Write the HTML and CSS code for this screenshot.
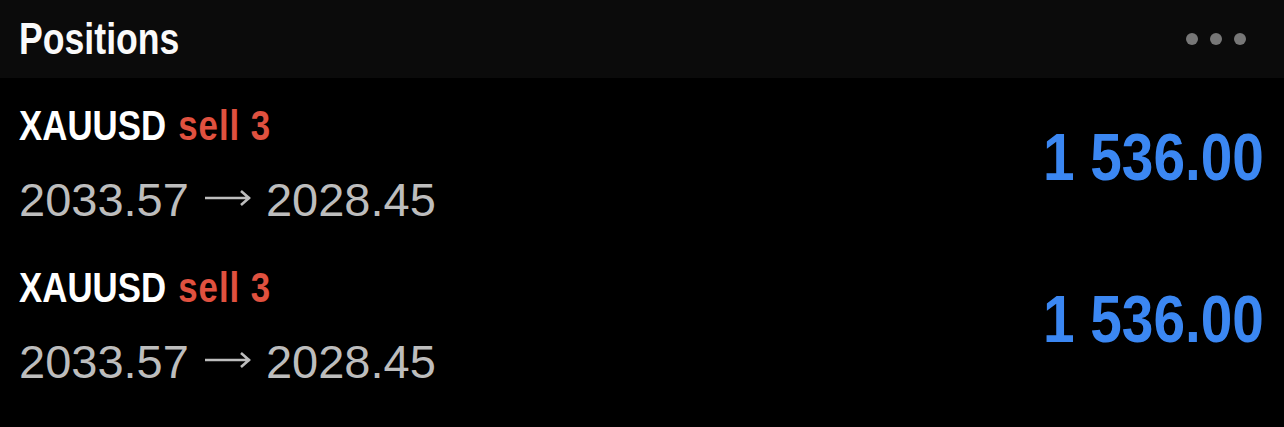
FILE: index.html
```html
<!DOCTYPE html>
<html lang="en">
<head>
  <meta charset="UTF-8">
  <meta name="viewport" content="width=device-width, initial-scale=1.0">
  <title>Positions</title>
  <link rel="stylesheet" href="styles.css">
</head>
<body>
  <div class="panel">
    <div class="panel-header">
      <h1 class="condensed">Positions</h1>
      <div class="menu-dots">
        <span></span><span></span><span></span>
      </div>
    </div>

    <ul class="positions">
      <li class="position">
        <div class="position-info">
          <div class="position-title condensed">XAUUSD <span class="side-sell">sell 3</span></div>
          <div class="position-prices">2033.57<svg class="arrow" viewBox="0 0 48 16"><path d="M1 8h45M37 1l8 7-8 7" fill="none" stroke="currentColor" stroke-width="2.6"/></svg>2028.45</div>
        </div>
        <div class="position-profit">1 536.00</div>
      </li>
      <li class="position">
        <div class="position-info">
          <div class="position-title condensed">XAUUSD <span class="side-sell">sell 3</span></div>
          <div class="position-prices">2033.57<svg class="arrow" viewBox="0 0 48 16"><path d="M1 8h45M37 1l8 7-8 7" fill="none" stroke="currentColor" stroke-width="2.6"/></svg>2028.45</div>
        </div>
        <div class="position-profit">1 536.00</div>
      </li>
    </ul>
  </div>
</body>
</html>
```

FILE: styles.css
```css
body {
  font-family: 'Liberation Sans', Arial, sans-serif;
  background-color: #000;
  color: white;
  margin: 0;
  padding: 0;
}

* {
  box-sizing: border-box;
}

/* no narrow face installed, so squeeze the bold one */
.condensed {
  font-weight: bold;
  transform: scaleX(0.81);
  transform-origin: left center;
  white-space: nowrap;
}

.panel {
  width: 100%;
}

.panel-header {
  display: flex;
  align-items: center;
  justify-content: space-between;
  height: 78px;
  padding: 0 38px 0 19px;
  background-color: #0b0b0b;
}

.panel-header h1 {
  margin: 0;
  font-size: 44px;
  color: #fafafa;
}

.menu-dots {
  display: flex;
  gap: 12px;
}

.menu-dots span {
  width: 12px;
  height: 12px;
  border-radius: 50%;
  background-color: #777;
}

.positions {
  list-style: none;
  margin: 0;
  padding: 0;
}

.position {
  display: flex;
  align-items: center;
  justify-content: space-between;
  height: 162px;
  padding: 6px 20px 0 19px;
}

.position-info {
  flex: 1;
}

.position-title {
  font-size: 43px;
  line-height: 50px;
  color: #fff;
}

.side-sell {
  margin-left: 3px;
  letter-spacing: 1.2px;
  color: #e0513f;
}

.position-prices {
  margin-top: 25px;
  font-size: 47px;
  line-height: 50px;
  color: #bdbdbd;
}

.arrow {
  width: 48px;
  height: 16px;
  margin: 0 14px 0 15px;
  vertical-align: 10px;
}

.position-profit {
  margin-bottom: 10px;
  font-weight: bold;
  font-size: 66px;
  color: #3b87f2;
  transform: scaleX(0.86);
  transform-origin: right center;
  white-space: nowrap;
}
```
